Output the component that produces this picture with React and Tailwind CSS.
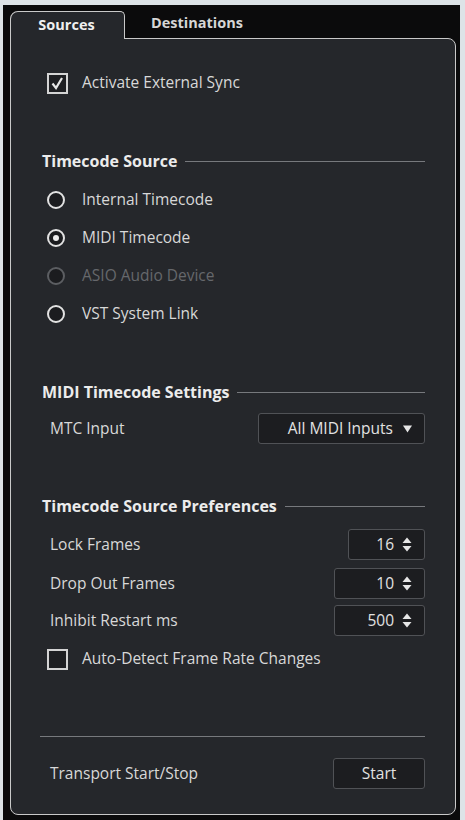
import React from "react";

function Heading({ children }) {
  return (
    <div className="flex items-center gap-2 h-[20px]">
      <span className="font-bold text-[#ececec] text-[16px] whitespace-nowrap -ml-px">{children}</span>
      <div className="flex-1 h-px bg-[#77797d]" />
    </div>
  );
}

function Checkbox({ checked, label }) {
  return (
    <div className="flex items-center h-[20px] pl-[4px]">
      <div className="w-[21px] h-[21px] border-2 border-[#d4d4d4] bg-[#1e1f22] flex items-center justify-center">
        {checked && (
          <svg width="13" height="13" viewBox="0 0 13 13">
            <path d="M1.5 6.5 L5 11 L11 1" fill="none" stroke="#e6e6e6" strokeWidth="2.2" />
          </svg>
        )}
      </div>
      <span className="ml-[14px] text-[15.5px] text-[#d8d8d8] whitespace-nowrap">{label}</span>
    </div>
  );
}

function Radio({ selected, disabled, label }) {
  return (
    <div className="flex items-center h-[38px] pl-[4px]">
      <div
        className={`w-[18px] h-[18px] rounded-full border-2 flex items-center justify-center bg-[#1b1c1f] ${
          disabled ? "border-[#5c5e62]" : "border-[#e2e2e2]"
        }`}
      >
        {selected && <div className="w-[6px] h-[6px] rounded-full bg-[#eeeeee]" />}
      </div>
      <span className={`ml-[17px] text-[15.5px] ${disabled ? "text-[#66686c]" : "text-[#d8d8d8]"}`}>{label}</span>
    </div>
  );
}

function SpinBox({ value, width }) {
  return (
    <div
      className={`${width} h-[31px] border border-[#505256] rounded-[3px] bg-[#1c1d20] flex items-center justify-end pr-[12px] gap-[8px]`}
    >
      <span className="text-[15.5px] text-[#e2e2e2]">{value}</span>
      <svg width="10" height="15" viewBox="0 0 10 15">
        <path d="M5 0.5 L9.5 6 H0.5 Z" fill="#e6e6e6" />
        <path d="M5 14.5 L9.5 9 H0.5 Z" fill="#e6e6e6" />
      </svg>
    </div>
  );
}

function Row({ label, children, className = "" }) {
  return (
    <div className={`flex items-center justify-between pl-[7px] ${className}`}>
      <span className="text-[15.5px] text-[#d8d8d8]">{label}</span>
      {children}
    </div>
  );
}

export default function App() {
  return (
    <div className="w-[465px] h-[820px] bg-[#dde3e7] pl-[3px] pt-[5px] pr-[5px] font-['Open_Sans',sans-serif]">
      <div className="h-full bg-[#0b0b0c] pl-[7px] pr-[4px] pt-[5px] pb-[5px] flex flex-col">
        <div className="flex items-end h-[28px]">
          <div className="w-[115px] h-[28px] border-t border-l border-r border-[#c9c9c9] rounded-tl-[8px] rounded-tr-[5px] bg-[#25272b] -mb-px relative z-10 flex items-center justify-center pb-[2px]">
            <span className="font-bold text-[14.5px] text-[#f0f0f0] -ml-[2px]">Sources</span>
          </div>
          <div className="h-[28px] flex items-center pl-[26px] pb-[2px]">
            <span className="font-bold text-[14.5px] text-[#d6d6d6]">Destinations</span>
          </div>
        </div>
        <div className="flex-1 border border-[#c9c9c9] rounded-tr-[8px] rounded-b-[8px] bg-[#25272b] pl-[32px] pr-[30px] flex flex-col">
          <div className="mt-[34px]">
            <Checkbox checked label="Activate External Sync" />
          </div>

          <div className="mt-[58px]">
            <Heading>Timecode Source</Heading>
          </div>
          <div className="mt-[10px]">
            <Radio label="Internal Timecode" />
            <Radio selected label="MIDI Timecode" />
            <Radio disabled label="ASIO Audio Device" />
            <Radio label="VST System Link" />
          </div>

          <div className="mt-[49px]">
            <Heading>MIDI Timecode Settings</Heading>
          </div>
          <Row label="MTC Input" className="mt-[11px]">
            <div className="w-[167px] h-[31px] border border-[#505256] rounded-[3px] bg-[#1c1d20] flex items-center justify-end pr-[12px] gap-[10px]">
              <span className="text-[15.5px] text-[#e2e2e2]">All MIDI Inputs</span>
              <svg width="9" height="8" viewBox="0 0 9 8">
                <path d="M0 0.5 H9 L4.5 7.5 Z" fill="#e6e6e6" />
              </svg>
            </div>
          </Row>

          <div className="mt-[52px]">
            <Heading>Timecode Source Preferences</Heading>
          </div>
          <Row label="Lock Frames" className="mt-[13px]">
            <SpinBox value="16" width="w-[77px]" />
          </Row>
          <Row label="Drop Out Frames" className="mt-[8px]">
            <SpinBox value="10" width="w-[91px]" />
          </Row>
          <Row label="Inhibit Restart ms" className="mt-[6px]">
            <SpinBox value="500" width="w-[91px]" />
          </Row>

          <div className="mt-[13px]">
            <Checkbox label="Auto-Detect Frame Rate Changes" />
          </div>

          <div className="mt-[67px] -ml-[3px] h-px bg-[#77797d]" />

          <Row label="Transport Start/Stop" className="mt-[21px]">
            <div className="w-[92px] h-[31px] border border-[#505256] rounded-[3px] bg-[#1c1d20] flex items-center justify-center">
              <span className="text-[15.5px] text-[#e2e2e2]">Start</span>
            </div>
          </Row>
        </div>
      </div>
    </div>
  );
}
